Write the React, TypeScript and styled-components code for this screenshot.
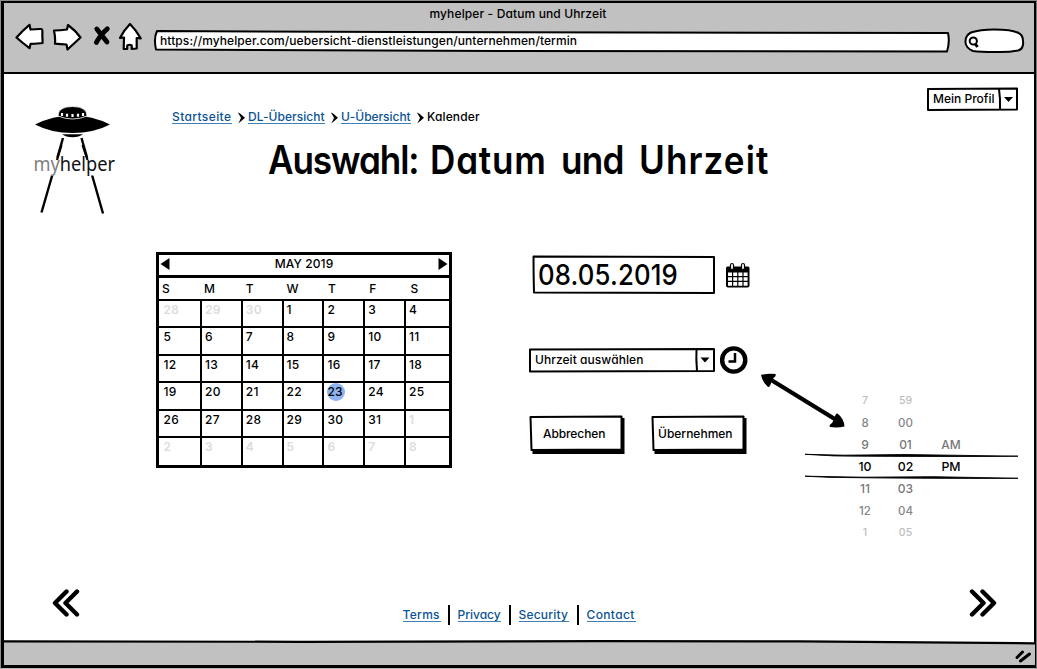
import React from "react";
import styled, { createGlobalStyle } from "styled-components";

const GlobalStyle = createGlobalStyle`
  * { box-sizing: border-box; }
  body {
    margin: 0;
    background: #fff;
    color: #000;
    font-family: Inter, "Liberation Sans", sans-serif;
    font-size: 12px;
    font-weight: 500;
    line-height: 16px;
    font-feature-settings: "cv11" 1, "ss03" 1;
  }
`;

const Window = styled.div`
  width: 1037px;
  height: 669px;
  overflow: hidden;
  display: flex;
  flex-direction: column;
  border: 1px solid #8a8d8a;
  border-bottom-color: #b5b5b5;
  border-right-color: #777;
`;

const Frame = styled.div`
  flex: 1;
  display: flex;
  flex-direction: column;
  border: 2px solid #000;
  border-left-width: 3px;
  border-bottom-width: 3px;
`;

const Chrome = styled.header`
  height: 71px;
  background: #c1c1c1;
  border-bottom: 2px solid #000;
`;

const WindowTitle = styled.div`
  height: 18px;
  padding: 3px 2px 0 0;
  text-align: center;
  letter-spacing: 0.13px;
`;

const NavRow = styled.div`
  display: flex;
  align-items: flex-start;
  padding: 1px 0 0 11px;
`;

const NavIcon = styled.svg<{ $gap: number }>`
  display: block;
  flex: none;
  margin-right: ${(p) => p.$gap}px;
  fill: #fff;
  stroke: #000;
  stroke-width: 2.2;
  stroke-linejoin: round;
`;

const Sketched = styled.div<{ $w: number; $h: number }>`
  position: relative;
  isolation: isolate;
  flex: none;
  display: flex;
  align-items: center;
  width: ${(p) => p.$w}px;
  height: ${(p) => p.$h}px;
`;

const Outline = styled.svg`
  position: absolute;
  inset: 0;
  z-index: -1;
  width: 100%;
  height: 100%;
  overflow: visible;
  fill: #fff;
  stroke: #000;
  stroke-width: 2;
  stroke-linejoin: round;
`;

const AddressBar = styled(Sketched)`
  margin-top: 8px;
  padding: 0 0 1px 6px;
  letter-spacing: 0.09px;
`;

const SearchPill = styled(Sketched)`
  margin: 7px 0 0 15px;
`;

const Page = styled.main`
  flex: 1;
  display: flex;
  flex-direction: column;
`;

const TopArea = styled.div`
  display: flex;
  align-items: flex-start;
  height: 178px;
  padding: 14px 16px 0 27px;
`;

const Logo = styled.svg`
  flex: none;
  margin-top: 16px;
`;

const Heading = styled.div`
  flex: 1;
  margin-left: 51px;
`;

const Crumbs = styled.nav`
  display: flex;
  align-items: flex-start;
  margin-top: 21px;
`;

const Link = styled.a<{ $w: number; $ls?: number }>`
  width: ${(p) => p.$w}px;
  height: 15px;
  white-space: nowrap;
  color: #0b5394;
  border-bottom: 1px solid #3f7fb8;
  letter-spacing: ${(p) => p.$ls ?? 0}px;
`;

const Current = styled.span`
  letter-spacing: 0.15px;
`;

const Separator = styled.svg`
  margin: 3px 2px 0 5px;
`;

const Title = styled.h1`
  display: flex;
  margin: 11px 0 0 96px;
  font-size: 39px;
  line-height: 48px;
  font-weight: 600;
  white-space: nowrap;
`;

const Word = styled.span<{ $w: number; $ls: number }>`
  width: ${(p) => p.$w}px;
  letter-spacing: ${(p) => p.$ls}px;
  transform: scaleX(0.9);
  transform-origin: left;
`;

const ProfileSelect = styled(Sketched)`
  padding: 0 0 1px 6px;
`;

const Main = styled.div`
  display: flex;
  align-items: flex-start;
  height: 336px;
  padding-left: 152px;
`;

const Calendar = styled.section`
  width: 296px;
  height: 216px;
  border: 3px solid #000;
  display: flex;
  flex-direction: column;
`;

const MonthBar = styled.div`
  height: 23px;
  border-bottom: 3px solid #000;
  display: flex;
  justify-content: space-between;
  align-items: center;
  padding: 0 1px 2px;
  letter-spacing: 0.1px;
`;

const DayGrid = styled.div`
  flex: 1;
  display: grid;
  grid-template-columns: 41px repeat(5, 40.8px) 1fr;
  grid-template-rows: 21px repeat(5, 27.4px) 1fr;
`;

const Weekday = styled.div<{ $x: number }>`
  padding: 3px 0 0 ${(p) => p.$x}px;
`;

const Day = styled.div<{ $first: boolean; $muted: boolean }>`
  border-top: 2px solid #000;
  border-left: ${(p) => (p.$first ? 0 : 2)}px solid #000;
  padding: 1px 0 0 ${(p) => (p.$first ? 4.5 : 3)}px;
  color: ${(p) => (p.$muted ? "#dcdcdc" : "#000")};
  font-weight: ${(p) => (p.$muted ? 600 : 500)};
  letter-spacing: 0.3px;
`;

const Marked = styled.span`
  display: flex;
  align-items: center;
  width: 18px;
  height: 18px;
  margin: -1px 0 0 -0.5px;
  padding-left: 0.5px;
  border-radius: 50%;
  background: #8db4f0;
  white-space: nowrap;
`;

const Form = styled.form`
  margin-left: 77px;
  width: 222px;
`;

const DateRow = styled.div`
  display: flex;
  align-items: flex-start;
  padding: 3px 0 0 3px;
`;

const DateField = styled(Sketched)`
  padding-left: 6px;
  font-size: 28px;
`;

const DateValue = styled.span`
  letter-spacing: 0.15px;
  transform: scaleX(0.92);
  transform-origin: left;
`;

const DateIcon = styled.svg`
  margin: 7px 0 0 10px;
`;

const TimeRow = styled.div`
  display: flex;
  align-items: center;
  margin-top: 51px;
`;

const TimeSelect = styled(Sketched)`
  padding: 0 0 1px 6px;
  letter-spacing: 0.06px;
`;

const ClockIcon = styled.svg`
  margin-left: 4px;
`;

const Buttons = styled.div`
  display: flex;
  gap: 27px;
  margin: 40px 0 0 1px;
`;

const Button = styled(Sketched)<{ $ls: number; $pad: number }>`
  padding: 0 0 3px ${(p) => p.$pad}px;
  letter-spacing: ${(p) => p.$ls}px;
`;

const Arrow = styled.svg`
  flex: none;
  margin: 119px 0 0 9px;
`;

const Picker = styled.div`
  width: 215px;
  margin: 138px 0 0 -42px;
`;

const PickerRow = styled.div<{ $color: string; $size: number }>`
  position: relative;
  display: grid;
  grid-template-columns: 40px 41px 50px;
  height: 22px;
  padding-left: 41px;
  align-items: center;
  text-align: center;
  color: ${(p) => p.$color};
  font-size: ${(p) => p.$size}px;
`;

const Footer = styled.footer`
  display: flex;
  align-items: flex-start;
  justify-content: space-between;
  padding: 0 37px 0 48px;
`;

const FooterLinks = styled.nav`
  display: flex;
  margin: 17px 0 0 -11px;
`;

const Bar = styled.span<{ $l: number; $r: number }>`
  width: 2px;
  height: 20px;
  background: #000;
  margin: 0 ${(p) => p.$r}px 0 ${(p) => p.$l}px;
`;

const LinkSlot = styled.span`
  display: flex;
  padding-top: 2px;
`;

const StatusBar = styled.div`
  flex: none;
  height: 25px;
  svg { display: block; }
`;

const Caret = () => <path d="M0 0h9l-4.500 5z" fill="#000" stroke="none" />;

const Chevrons = ({ flip }: { flip?: boolean }) => (
  <svg width="28" height="30" viewBox="0 0 28 30" fill="none" stroke="#000" strokeWidth="4.400" strokeLinecap="round" strokeLinejoin="round">
    <g transform={flip ? "translate(28 0) scale(-1 1)" : undefined}>
      <path d="M14.500 3.500 3 15l11.500 11.500M25 3.500 13.500 15 25 26.500" />
    </g>
  </svg>
);

const CrumbArrow = () => (
  <Separator width="9" height="12" viewBox="0 0 9 12">
    <path d="M.8 .5Q3 1 8 5.800 4 9.500 1.200 11.500 3 8.500 4 5.800 2.500 3 .8 .5z" fill="#000" />
  </Separator>
);

const titleWords: [string, number, number][] = [
  ["Auswahl:", 162, -1.2],
  ["Datum", 131, 0.9],
  ["und", 78, -0.8],
  ["Uhrzeit", 132, 1.2],
];

const days = [
  28, 29, 30, 1, 2, 3, 4, 5, 6, 7, 8, 9, 10, 11, 12, 13, 14, 15, 16, 17, 18,
  19, 20, 21, 22, 23, 24, 25, 26, 27, 28, 29, 30, 31, 1, 2, 3, 4, 5, 6, 7, 8,
];

const weekdays: [string, number][] = [
  ["S", 3], ["M", 4], ["T", 5], ["W", 5], ["T", 5.5], ["F", 6], ["S", 6.5],
];

const times: [string, string, string, string, number][] = [
  ["7", "59", "", "#bdbdbd", 10.5],
  ["8", "00", "", "#868686", 11.5],
  ["9", "01", "AM", "#777", 12],
  ["10", "02", "PM", "#000", 12.3],
  ["11", "03", "", "#777", 12],
  ["12", "04", "", "#868686", 11.5],
  ["1", "05", "", "#bdbdbd", 10.5],
];

const buttons: [string, number, number][] = [
  ["Abbrechen", 13, -0.1],
  ["Übernehmen", 6, 0],
];

export default function App() {
  return (
    <Window>
      <GlobalStyle />
      <Frame>
        <Chrome>
          <WindowTitle>myhelper - Datum und Uhrzeit</WindowTitle>
          <NavRow>
            <NavIcon $gap={8} width="30" height="30" viewBox="15 22 30 30">
              <path d="M16.500 37.500Q22 31 29.500 24.800L30.500 29.500q6-.6 10.800-.5 1.500.5 1 5l.3 9q-4 .8-12 .8L29.500 48.200Q22 42.500 16.500 37.500z" />
            </NavIcon>
            <NavIcon $gap={10} width="30" height="30" viewBox="53 22 30 30">
              <path d="M54 30.500q6 0 13-1L68 25q7 5 12.500 12.500Q74 43.500 67.500 49.500l-1-5q-6 0-11.500-.8.500-6-1-13.200z" />
            </NavIcon>
            <NavIcon $gap={7} width="18" height="30" viewBox="93 22 18 30">
              <path d="M96.800 29 107 42M107.300 28.800Q101 34 96.300 42.500" strokeWidth="4.800" strokeLinecap="round" />
            </NavIcon>
            <NavIcon $gap={11} width="25" height="30" viewBox="118 22 25 30">
              <path d="M130 24Q124 30 120 38l4-.5-.3 11.500h3.500v-3.500q2.500-1.500 4.500 0V49l5-.5V38l4 .3Q136 30 130 24z" />
            </NavIcon>
            <AddressBar $w={796} $h={22}>
              <Outline viewBox="154 30 796 22">
                <path d="M157 31 400 32 948 33Q950 42 947 51.500L500 51 156 49.500Q153.500 38 157 31z" />
              </Outline>
              https://myhelper.com/uebersicht-dienstleistungen/unternehmen/termin
            </AddressBar>
            <SearchPill $w={59} $h={24}>
              <Outline viewBox="965 29 59 24">
                <path d="M971 32.500Q980 29.500 994 29.500q18 0 24.500 3.500 4.500 2 4.500 8 1 8-5 9.500-10 2-23 1.500-15 0-22-1-7-3-7.500-8.500Q965 35.500 971 32.500z" />
                <circle cx="973.300" cy="41" r="3.600" strokeWidth="2" />
                <path d="M975 43.500 977.500 47" strokeWidth="3" />
              </Outline>
            </SearchPill>
          </NavRow>
        </Chrome>

        <Page>
          <TopArea>
            <Logo width="90" height="112" viewBox="31 103 90 112">
              <path d="M63 137 41.500 211.500M81.500 137 103 212.500" stroke="#000" strokeWidth="2.400" />
              <path d="M31 156.500h88v18h-88z" fill="#fff" />
              <path d="M61.500 144 57 159M82.500 144 87.500 159" stroke="#000" strokeWidth="2.200" />
              <path d="M59 131h27v5h-27z" fill="#fff" />
              <path d="M62 133.300h21q-4 3-10.500 3t-10.500-3z" />
              <path d="M35 123.500q18-9 37.500-9t37.500 9q-16 8.500-37.500 8.500T35 123.500z" />
              <path d="M58 115q0-9.500 14.500-9.500T87 115q-7 3-14.500 3T58 115z" stroke="#fff" strokeWidth=".8" />
              <path d="M62 112v3M67 112.700v3M72.500 113v3M78 112.700v3M83 112v3" stroke="#fff" strokeWidth="2.200" />
              <text x="33.500" y="170" fontFamily="Noto Sans, sans-serif" fontWeight="400" fontSize="19" textLength="81.500" lengthAdjust="spacingAndGlyphs">
                <tspan fill="#808080">my</tspan>
                <tspan fill="#111">helper</tspan>
              </text>
            </Logo>
            <Heading>
              <Crumbs>
                <Link $w={60} $ls={0.38}>Startseite</Link>
                <CrumbArrow />
                <Link $w={77} $ls={0.04}>DL-Übersicht</Link>
                <CrumbArrow />
                <Link $w={70} $ls={-0.05}>U-Übersicht</Link>
                <CrumbArrow />
                <Current>Kalender</Current>
              </Crumbs>
              <Title>
                {titleWords.map(([word, w, ls]) => (
                  <Word key={word} $w={w} $ls={ls}>{word}</Word>
                ))}
              </Title>
            </Heading>
            <ProfileSelect $w={91} $h={23}>
              <Outline viewBox="927 88 91 23">
                <path d="M928 89 1017 88.500v21L928 110z" />
                <path d="M999 89q1.500 10 1 21" />
                <g transform="translate(1004 97)"><Caret /></g>
              </Outline>
              Mein Profil
            </ProfileSelect>
          </TopArea>

          <Main>
            <Calendar>
              <MonthBar>
                <svg width="10" height="12" viewBox="0 0 10 12"><path d="M9.500 0v12L.5 6z" /></svg>
                <span>MAY 2019</span>
                <svg width="10" height="12" viewBox="0 0 10 12"><path d="M.5 0v12l9-6z" /></svg>
              </MonthBar>
              <DayGrid>
                {weekdays.map(([d, x], i) => (
                  <Weekday key={i} $x={x}>{d}</Weekday>
                ))}
                {days.map((d, i) => (
                  <Day key={i} $first={i % 7 === 0} $muted={i < 3 || i > 33}>
                    {i === 25 ? <Marked>{d}</Marked> : d}
                  </Day>
                ))}
              </DayGrid>
            </Calendar>

            <Form>
              <DateRow>
                <DateField $w={183} $h={39}>
                  <Outline viewBox="532 255 183 39">
                    <path d="M533.500 256.500 714 257v36L534 292.500q-.5-18-.5-36z" />
                  </Outline>
                  <DateValue>08.05.2019</DateValue>
                </DateField>
                <DateIcon width="25" height="26" viewBox="725 262 25 26">
                  <path d="M726 268q0-1.500 1.500-1.500h20.500q1.500 0 1.500 1.500v17.500q0 2-2 2h-19.500q-2 0-2-2z" />
                  <path d="M728 272.500h4v3.500h-4zM733.200 272.500h4v3.500h-4zM738.400 272.500h4v3.500h-4zM743.600 272.500h4v3.500h-4zM728 277.300h4v3.500h-4zM733.200 277.300h4v3.500h-4zM738.400 277.300h4v3.500h-4zM743.600 277.300h4v3.500h-4zM728 282h4v3.800h-4zM733.200 282h4v3.800h-4zM738.400 282h4v3.800h-4zM743.600 282h4v3.800h-4z" fill="#fff" />
                  <rect x="730.500" y="263.500" width="3" height="6" rx="1.500" fill="#fff" stroke="#000" strokeWidth="1.200" />
                  <rect x="741.500" y="263.500" width="3" height="6" rx="1.500" fill="#fff" stroke="#000" strokeWidth="1.200" />
                </DateIcon>
              </DateRow>
              <TimeRow>
                <TimeSelect $w={186} $h={24}>
                  <Outline viewBox="529 348 186 24">
                    <path d="M530 349.500 714 349v22L530 371.500z" />
                    <path d="M696.500 349q-.5 10 .5 22" />
                    <g transform="translate(700.500 357.500)"><Caret /></g>
                  </Outline>
                  Uhrzeit auswählen
                </TimeSelect>
                <ClockIcon width="30" height="30" viewBox="719 345 30 30" fill="none" stroke="#000">
                  <circle cx="733.700" cy="360" r="11.600" strokeWidth="4.400" />
                  <path d="M735 353v8.500h-6.500" strokeWidth="2.500" />
                </ClockIcon>
              </TimeRow>
              <Buttons>
                {buttons.map(([label, pad, ls]) => (
                  <Button key={label} $w={95} $h={40} $pad={pad} $ls={ls}>
                    <Outline viewBox="530 415 95 40">
                      <path d="M531.500 418h93v36h-92z" fill="#000" stroke="none" />
                      <path d="M530.500 417 621.500 416.500V449.500L531.500 450z" />
                    </Outline>
                    {label}
                  </Button>
                ))}
              </Buttons>
            </Form>

            <Arrow width="86" height="58" viewBox="760 371 86 58">
              <path d="M768 378 838 421" stroke="#000" strokeWidth="4.400" />
              <path d="M761 375q7-2 14.500-1 1 2-2 4l-2 3.500q-1.500 6-3.500 5.500-5.500-5-7-12zM844.500 426.500q-7 1.500-14.500.5-1.500-2 2-4l2.500-4.500q1-5.500 3-5 6.500 5 7 13z" />
            </Arrow>

            <Picker>
              {times.map(([h, m, ap, color, size], i) => (
                <PickerRow key={i} $color={color} $size={size}>
                  {i === 3 && (
                    <Outline viewBox="0 0 215 22">
                      <path d="M1-1.700 40-.8 100-1.500 214 .2Q150 .9 30-.1zM1 20.200 60 21.200l70-.5 84 1.600q-100 .4-190-1z" fill="#000" strokeWidth=".9" />
                    </Outline>
                  )}
                  <span>{h}</span>
                  <span>{m}</span>
                  <span>{ap}</span>
                </PickerRow>
              ))}
            </Picker>
          </Main>

          <Footer>
            <Chevrons />
            <FooterLinks>
              <LinkSlot><Link $w={38} $ls={0.3}>Terms</Link></LinkSlot>
              <Bar $l={7} $r={8} />
              <LinkSlot><Link $w={43}>Privacy</Link></LinkSlot>
              <Bar $l={8} $r={8} />
              <LinkSlot><Link $w={50} $ls={0.2}>Security</Link></LinkSlot>
              <Bar $l={8} $r={8} />
              <LinkSlot><Link $w={49} $ls={0.35}>Contact</Link></LinkSlot>
            </FooterLinks>
            <Chevrons flip />
          </Footer>
        </Page>

        <StatusBar>
          <svg width="1031" height="25" viewBox="4 640 1031 25">
            <path d="M4 641.500 300 642l300-.8 230 0L1035 643.500V665H4z" fill="#c1c1c1" />
            <path d="M4 641.300 300 641.800l300-.6 200 .2L1035 643.300" fill="none" stroke="#000" strokeWidth="2.200" />
            <path d="M1017 657.500 1022.500 652M1020.500 661 1029.500 654" stroke="#000" strokeWidth="3" strokeLinecap="round" />
          </svg>
        </StatusBar>
      </Frame>
    </Window>
  );
}
